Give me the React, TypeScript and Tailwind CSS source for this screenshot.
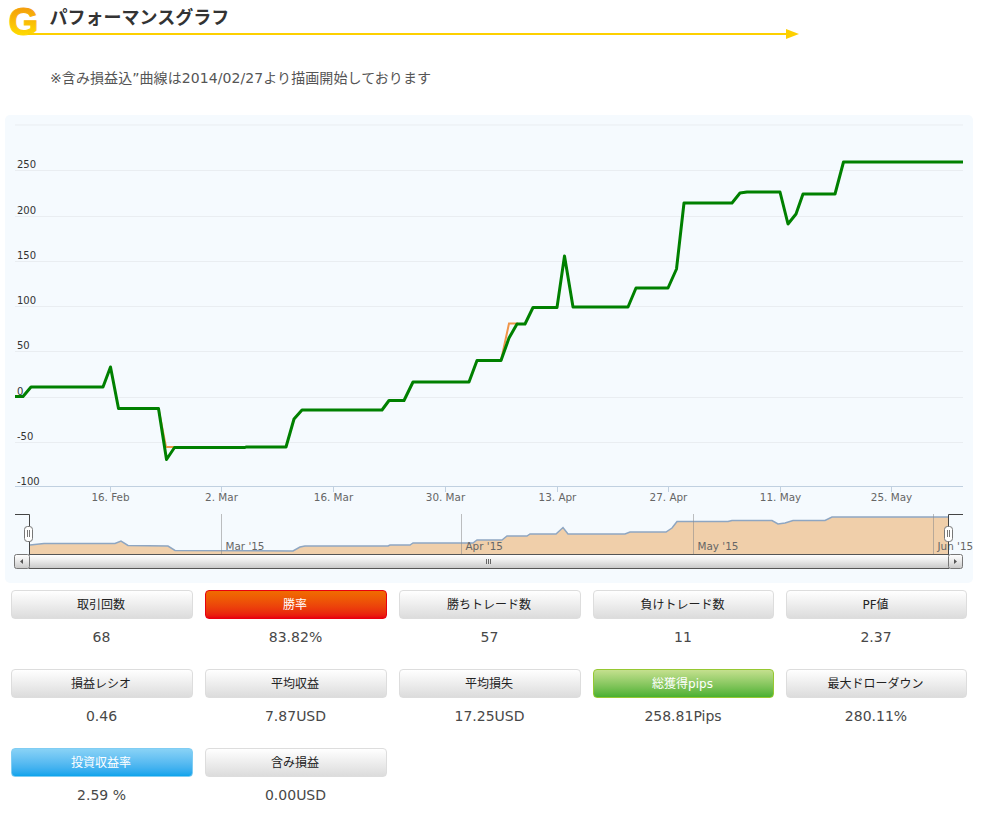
import React from "react";

const FONT = '"DejaVu Sans","Noto Sans CJK JP",sans-serif';

const green = "15,396.5 23,396.5 31,387 103,387 110.5,367 118.5,408.5 158.5,408.5 166.5,459.5 174.5,447.5 245,447.5 246,447 286,447 294,419 302,410 382,410 389,400.5 404,400.5 413,382 469,382 477,360.5 501,360.5 509,338 517,324 525,324 533,307.5 557,307.5 564.5,256 573,307 628,307 636,288 668,288 676.5,269 684,203 732,203 740,193 747,192 780,192 788,224 796,214 803,194 835,194 843.5,162 963,162";
const navTop = "30,545 44,543.5 115,543.5 121,541 128,545.5 168,546 175,550.5 293,551 300,547 305,546 388,546 390,545 410,545 413,543 473,543 477,540 502,540 507,536 527,536 530,534 556,534 563,527.5 568,534 625,534 630,532 666,532 672,528 677,521.5 728,521.5 732,520.5 772,520.5 778,524 785,523 793,520.5 825,520.5 832,517 948,517";

const yLabels: [string, number][] = [["250", 168], ["200", 214], ["150", 259], ["100", 304], ["50", 349], ["0", 395], ["-50", 440], ["-100", 485]];
const grid = [125, 170.5, 216.5, 261.5, 306.5, 351.5, 397.5, 442.5];
const xLabels: [string, number][] = [["16. Feb", 110.5], ["2. Mar", 221.5], ["16. Mar", 333.5], ["30. Mar", 445.5], ["13. Apr", 557.5], ["27. Apr", 668.5], ["11. May", 780.5], ["25. May", 891.5]];
const months: [string, number][] = [["Mar '15", 221.5], ["Apr '15", 461.5], ["May '15", 693.5], ["Jun '15", 933.5]];

const stats: { label: string; value: string; kind?: "red" | "green" | "blue" }[] = [
  { label: "取引回数", value: "68" },
  { label: "勝率", value: "83.82%", kind: "red" },
  { label: "勝ちトレード数", value: "57" },
  { label: "負けトレード数", value: "11" },
  { label: "PF値", value: "2.37" },
  { label: "損益レシオ", value: "0.46" },
  { label: "平均収益", value: "7.87USD" },
  { label: "平均損失", value: "17.25USD" },
  { label: "総獲得pips", value: "258.81Pips", kind: "green" },
  { label: "最大ドローダウン", value: "280.11%" },
  { label: "投資収益率", value: "2.59 %", kind: "blue" },
  { label: "含み損益", value: "0.00USD" },
];

function btnClass(kind?: "red" | "green" | "blue") {
  if (kind === "red") return "border-[#e8000f] bg-gradient-to-b from-[#f06c00] to-[#e8000f] text-white";
  if (kind === "green") return "border-[#96c832] bg-gradient-to-b from-[#c4e08e] to-[#48b030] text-white";
  if (kind === "blue") return "border-[#80cdf3] bg-gradient-to-b from-[#88d2f6] to-[#08a4ec] text-white";
  return "border-[#dddddd] bg-gradient-to-b from-white to-[#dcdcdc] text-[#222222]";
}

function Chart() {
  return (
    <svg viewBox="5 115 968 468" width={968} height={468} className="block" style={{ fontFamily: FONT }}>
      <defs>
        <linearGradient id="sb" x1="0" y1="0" x2="0" y2="1">
          <stop offset="0" stopColor="#ffffff" />
          <stop offset="0.35" stopColor="#f0f0f0" />
          <stop offset="1" stopColor="#c8c8c8" />
        </linearGradient>
      </defs>
      {grid.map((y) => (
        <line key={y} x1={15} x2={963} y1={y} y2={y} stroke="#e9edf1" strokeWidth={1} />
      ))}
      <line x1={15} x2={963} y1={486.5} y2={486.5} stroke="#c0d0e0" strokeWidth={1} />
      {xLabels.map(([t, x]) => (
        <g key={t}>
          <line x1={x} x2={x} y1={486} y2={492} stroke="#c0d0e0" />
          <text x={x} y={501} textAnchor="middle" fontSize={10.4} fill="#666666">{t}</text>
        </g>
      ))}
      {yLabels.map(([t, y]) => (
        <text key={t} x={17} y={y} fontSize={10} fill="#333333">{t}</text>
      ))}
      <polyline points="158.5,408.5 166,447 175,447" fill="none" stroke="#f0954a" strokeWidth={2} />
      <polyline points="501,360.5 509,323.5 518,323.5" fill="none" stroke="#f0954a" strokeWidth={2} />
      <polyline points={green} fill="none" stroke="#008000" strokeWidth={3} strokeLinejoin="round" />

      {/* navigator */}
      <polygon points={`30,554 ${navTop} 948,554`} fill="#f0cfaa" />
      <polyline points={navTop} fill="none" stroke="#8ea6c2" strokeWidth={1.5} />
      {months.map(([t, x]) => (
        <g key={t}>
          <line x1={x} x2={x} y1={514} y2={554} stroke="#8a8a8a" strokeOpacity={0.55} />
          <text x={x + 4} y={550} fontSize={10.4} fill="#666666">{t}</text>
        </g>
      ))}
      <polyline points="15,514.5 29.5,514.5 29.5,554" fill="none" stroke="#444444" />
      <polyline points="948.5,554 948.5,514.5 963,514.5" fill="none" stroke="#444444" />
      <rect x={24.5} y={526.5} width={8} height={15} rx={3} fill="#ffffff" stroke="#777777" />
      <path d="M27.5 530v7M29.5 530v7" stroke="#777777" />
      <rect x={944.5} y={526.5} width={8} height={15} rx={3} fill="#ffffff" stroke="#777777" />
      <path d="M947.5 530v7M949.5 530v7" stroke="#777777" />

      {/* scrollbar */}
      <rect x={29.5} y={554.5} width={919} height={14} fill="url(#sb)" />
      <line x1={29} x2={949} y1={554.5} y2={554.5} stroke="#555555" />
      <line x1={29} x2={949} y1={568.5} y2={568.5} stroke="#555555" />
      <rect x={14.5} y={554.5} width={15} height={14} rx={2} fill="url(#sb)" stroke="#777777" />
      <rect x={948.5} y={554.5} width={14} height={14} rx={2} fill="url(#sb)" stroke="#777777" />
      <path d="M23 559l-3 2.5 3 2.5z" fill="#555555" />
      <path d="M954 559l3 2.5-3 2.5z" fill="#555555" />
      <path d="M486.5 559v5M488.5 559v5M490.5 559v5" stroke="#666666" />
    </svg>
  );
}

export default function App() {
  return (
    <div className="w-[981px] h-[817px] overflow-hidden bg-white text-[#484848]" style={{ fontFamily: FONT }}>
      <header className="relative pt-[6px]">
        <svg width={48} height={48} viewBox="0 0 48 48" className="absolute left-0 top-0">
          <defs>
            <linearGradient id="g" gradientUnits="userSpaceOnUse" x1="0" y1="6" x2="0" y2="36">
              <stop offset="0" stopColor="#f39a0c" />
              <stop offset="1" stopColor="#ffdc00" />
            </linearGradient>
          </defs>
          <text x={23.5} y={34.5} textAnchor="middle" fontSize={38.5} fontWeight={700} fill="url(#g)" stroke="url(#g)" strokeWidth={1} style={{ fontFamily: '"Liberation Sans",sans-serif' }}>G</text>
        </svg>
        <h1 className="relative pl-[49.5px] h-[23px] text-[18px] leading-[24px] font-bold text-[#333333]">パフォーマンスグラフ</h1>
        <div className="relative flex items-center h-[10px] pl-[28px]">
          <div className="w-[758px] h-[2px] bg-[#fdd000]" />
          <div className="w-0 h-0 border-y-[5px] border-y-transparent border-l-[13px] border-l-[#fdd000]" />
        </div>
      </header>
      <p className="mt-[29px] pl-[50px] text-[14px] leading-[20px] tracking-[0.08px] text-[#555555]">※含み損益込”曲線は2014/02/27より描画開始しております</p>
      <section className="mt-[27px] ml-[5px] w-[968px] h-[468px] rounded-[5px] bg-[#f5fafe]">
        <Chart />
      </section>
      <div className="mt-[7px] ml-[11px] w-[956px] grid grid-cols-[182px_182px_182px_181px_181px] gap-x-[12px] auto-rows-[79px]">
        {stats.map((s) => (
          <div key={s.label}>
            <div className={`h-[29px] rounded-[4px] border pr-[2px] flex items-center justify-center text-[12px] ${btnClass(s.kind)}`}>{s.label}</div>
            <div className="mt-[8px] pr-[1px] text-center text-[14px] leading-[20px]">{s.value}</div>
          </div>
        ))}
      </div>
    </div>
  );
}
